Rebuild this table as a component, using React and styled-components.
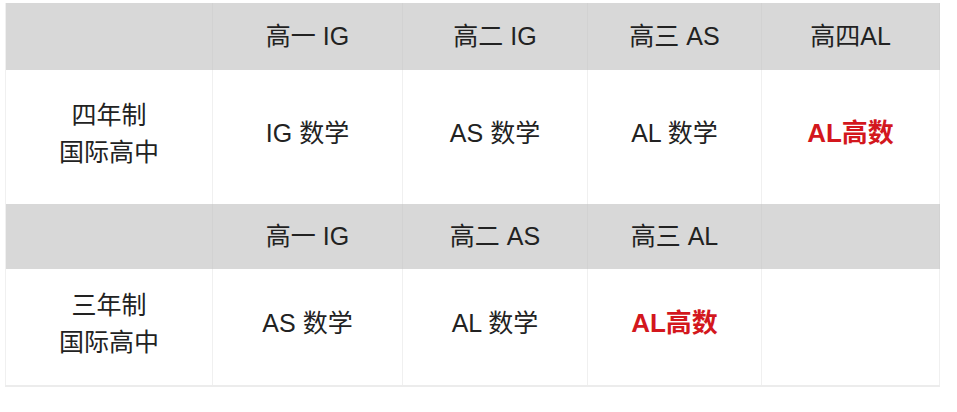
import React from 'react';
import styled, { createGlobalStyle } from 'styled-components';

const GlobalStyle = createGlobalStyle`
    html, body {
        margin: 0;
        padding: 0;
        background: #ffffff;
    }
    body {
        font-family: "Liberation Sans", "Noto Sans CJK SC", sans-serif;
        color: #222222;
    }
`;

const Page = styled.div`
    width: 957px;
    height: 412px;
    padding: 3px 0 0 5px;
    box-sizing: border-box;
`;

const Table = styled.div`
    display: grid;
    grid-template-columns: 208px 190px 185px 174px 178px;
    width: 935px;
    border-bottom: 2px solid #ececec;
`;

const Cell = styled.div`
    display: flex;
    flex-direction: column;
    align-items: center;
    justify-content: center;
    height: ${ p => p.h }px;
    padding-bottom: ${ p => p.head ? 0 : 7 }px;
    box-sizing: border-box;
    background: ${ p => p.head ? '#d8d8d8' : '#ffffff' };
    border-right: 1px solid ${ p => p.head ? '#d2d2d2' : '#f0f0f0' };
    border-left: ${ p => p.first ? '1px solid #f0f0f0' : 'none' };
    font-size: 25px;
    line-height: 37px;
    color: #222222;
    &:last-child {
        border-right: 1px solid #f0f0f0;
    }
`;

const Red = styled.span`
    color: #d3171d;
    font-weight: 700;
    font-size: 26px;
`;

const rows = [
    { head: true, h: 67, cells: ['', '高一 IG', '高二 IG', '高三 AS', '高四AL'] },
    { head: false, h: 134, cells: [['四年制', '国际高中'], 'IG 数学', 'AS 数学', 'AL 数学', { red: 'AL高数' }] },
    { head: true, h: 65, cells: ['', '高一 IG', '高二 AS', '高三 AL', ''] },
    { head: false, h: 116, cells: [['三年制', '国际高中'], 'AS 数学', 'AL 数学', { red: 'AL高数' }, ''] },
];

const renderContent = c => {
    if (Array.isArray(c)) return c.map(line => <div key={ line }>{ line }</div>);
    if (c && c.red) return <Red>{ c.red }</Red>;
    return c;
};

const App = () => (
    <>
        <GlobalStyle />
        <Page>
            <Table>
                { rows.map((row, ri) =>
                    row.cells.map((c, ci) => (
                        <Cell key={ `${ ri }-${ ci }` }
                              head={ row.head }
                              h={ row.h }
                              first={ ci === 0 }
                        >
                            { renderContent(c) }
                        </Cell>
                    ))
                ) }
            </Table>
        </Page>
    </>
);

export default App;
